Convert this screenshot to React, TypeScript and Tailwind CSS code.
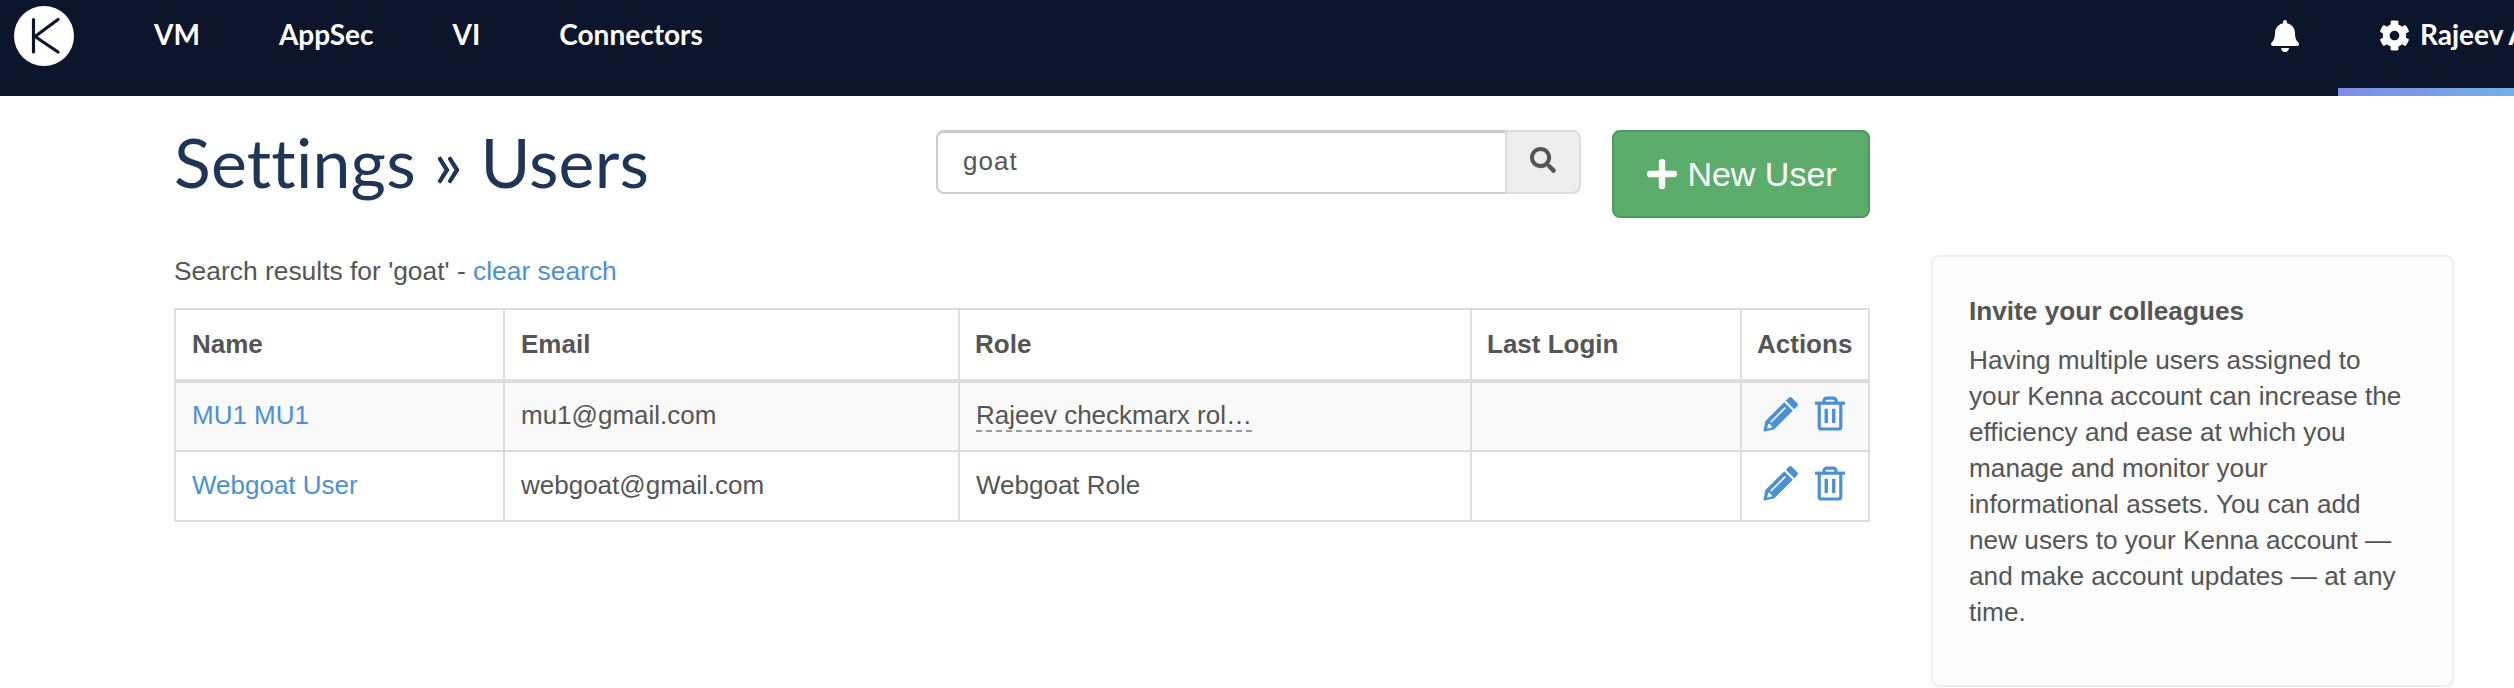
import { FaBell, FaCog, FaPlus, FaSearch } from "react-icons/fa";

const COLUMNS = [
  { label: "Name", width: "w-[329px]", pad: "pl-[16px]" },
  { label: "Email", width: "w-[455px]", pad: "pl-[16px]" },
  { label: "Role", width: "w-[512px]", pad: "pl-[15px]" },
  { label: "Last Login", width: "w-[270px]", pad: "pl-[15px]" },
  { label: "Actions", width: "w-[128px]", pad: "pl-[15px]" },
];

const NAV_ITEMS = ["VM", "AppSec", "VI", "Connectors"];

function KennaLogo() {
  return (
    <svg viewBox="0 0 60 60" className="w-[60px] h-[60px] shrink-0">
      <circle cx="30" cy="30" r="30" fill="#fff" />
      <path d="M19.5 13.5v32.5M44 13.5 21 30.5 44 46" fill="none" stroke="#0c152b" strokeWidth="3.2" strokeLinecap="round" strokeLinejoin="round" />
    </svg>
  );
}

function PencilIcon() {
  return (
    <svg viewBox="0 0 36 36" className="w-[36px] h-[36px]" fill="#4a90d9">
      <path d="M26 1.5a2 2 0 0 1 2.6 0l5.9 5.9a2 2 0 0 1 0 2.6l-3.2 3.2-8.5-8.5z" />
      <path fillRule="evenodd" d="M21.3 6.2l8.5 8.5L11 33.5 1.2 35.4a.6.6 0 0 1-.7-.7L2.4 25zM21.7 11 7 25.7l1.2 1.1L22.9 12.2zM5.3 27.5l-1.2 5 5-1.1c-.3-1.9-1.9-3.5-3.8-3.9z" />
    </svg>
  );
}

function TrashIcon() {
  return (
    <svg viewBox="0 0 32 36" className="w-[30px] h-[35px]" fill="none" stroke="#4a90d9" strokeWidth="3.4">
      <path d="M0 7h32" />
      <path d="M9.5 7V4.5a3 3 0 0 1 3-3h7a3 3 0 0 1 3 3V7" />
      <path d="M4.5 7v25a2.5 2.5 0 0 0 2.5 2.5h18a2.5 2.5 0 0 0 2.5-2.5V7" />
      <path d="M12 13v15M20 13v15" strokeWidth="3.6" />
    </svg>
  );
}

function Row({ name, email, role, striped, dashed }: { name: string; email: string; role: string; striped?: boolean; dashed?: boolean }) {
  const cell = "border-[2px] border-[#ddd] px-[16px] pb-[2px] align-middle h-[70px]";
  return (
    <tr className={striped ? "bg-[#f9f9f9]" : "bg-white"}>
      <td className={cell}>
        <a className="text-[#4a90d9]">{name}</a>
      </td>
      <td className={cell}>{email}</td>
      <td className={cell}>
        {dashed ? <span className="border-b-[2px] border-dashed border-[#999]">{role}</span> : role}
      </td>
      <td className={cell}></td>
      <td className={cell}>
        <div className="flex items-center gap-[16px] pl-[5px] pb-[4px]">
          <PencilIcon />
          <TrashIcon />
        </div>
      </td>
    </tr>
  );
}

export default function App() {
  return (
    <div className="w-[2514px] h-[688px] overflow-hidden bg-white text-[#555] font-['Liberation_Sans',Arial,sans-serif] text-[26px]">
      {/* Top nav */}
      <header className="h-[96px] bg-[#0c152b] flex items-start text-white">
        <div className="pl-[14px] pt-[6px]">
          <KennaLogo />
        </div>
        <nav className="flex gap-[79px] ml-[80px] pt-[16px] font-['Lato',sans-serif] font-bold text-[28px] leading-[36px]">
          {NAV_ITEMS.map((item) => (
            <span key={item}>{item}</span>
          ))}
        </nav>
        <div className="ml-auto flex items-start h-full">
          <FaBell className="w-[28px] h-[32px] mt-[20px] mr-[39px]" />
          <div className="w-[176px] h-full flex items-start gap-[10px] relative pl-[41px] pt-[16px] font-['Lato',sans-serif] font-bold text-[28px] leading-[36px] overflow-hidden whitespace-nowrap">
            <FaCog className="w-[31px] h-[31px] shrink-0 mt-[4px]" />
            <span>Rajeev A</span>
            <div className="absolute left-0 right-0 bottom-0 h-[8px] bg-gradient-to-r from-[#7f8be6] to-[#6fb0ea]" />
          </div>
        </div>
      </header>

      <main className="flex pl-[174px] gap-[61px]">
        <div className="w-[1696px]">
          <div className="flex items-start pt-[34px]">
            <h1 className="w-[762px] text-[68px] leading-[64px] tracking-[0.2px] text-[#1f3557] font-['Lato',sans-serif]">Settings » Users</h1>
            <div className="flex w-[645px] h-[64px]">
              <div className="flex-1 flex items-center border-[2px] border-t-[3px] border-[#ccc] border-r-0 rounded-l-[8px] pl-[25px] pb-[2px] tracking-[1px]">goat</div>
              <div className="w-[76px] flex items-center justify-center bg-[#eee] border-[2px] border-[#ddd] rounded-r-[8px]">
                <FaSearch className="w-[26px] h-[26px] text-[#555] mb-[4px]" />
              </div>
            </div>
            <button className="ml-[31px] w-[258px] h-[88px] flex items-center justify-center gap-[8px] bg-[#5cad6b] border-[2px] border-[#4c9a5c] rounded-[8px] text-white text-[34px]">
              <FaPlus className="w-[34px] h-[34px]" />
              New User
            </button>
          </div>

          <p className="mt-[35px] leading-[36px] text-[26.4px]">
            Search results for 'goat' - <a className="text-[#4a90d9]">clear search</a>
          </p>

          <table className="mt-[19px] w-[1695px] border-collapse table-fixed">
            <thead>
              <tr>
                {COLUMNS.map((col) => (
                  <th key={col.label} className={`${col.width} ${col.pad} h-[72px] border-[2px] border-b-[4px] border-[#ddd] pr-[10px] text-left font-bold`}>
                    {col.label}
                  </th>
                ))}
              </tr>
            </thead>
            <tbody>
              <Row name="MU1 MU1" email="mu1@gmail.com" role="Rajeev checkmarx rol…" striped dashed />
              <Row name="Webgoat User" email="webgoat@gmail.com" role="Webgoat Role" />
            </tbody>
          </table>
        </div>

        {/* Sidebar */}
        <aside className="w-[523px] h-[432px] mt-[159px] bg-[#fcfcfc] border-[2px] border-[#eee] rounded-[8px] pl-[36px] pr-[46px] pt-[37px] text-[26.2px]">
          <h3 className="font-bold leading-[34px]">Invite your colleagues</h3>
          <p className="mt-[14px] leading-[36px]">
            Having multiple users assigned to your Kenna account can increase the efficiency and ease at which you manage and monitor your informational assets. You can add new users to your Kenna account — and make account updates — at any time.
          </p>
        </aside>
      </main>
    </div>
  );
}
